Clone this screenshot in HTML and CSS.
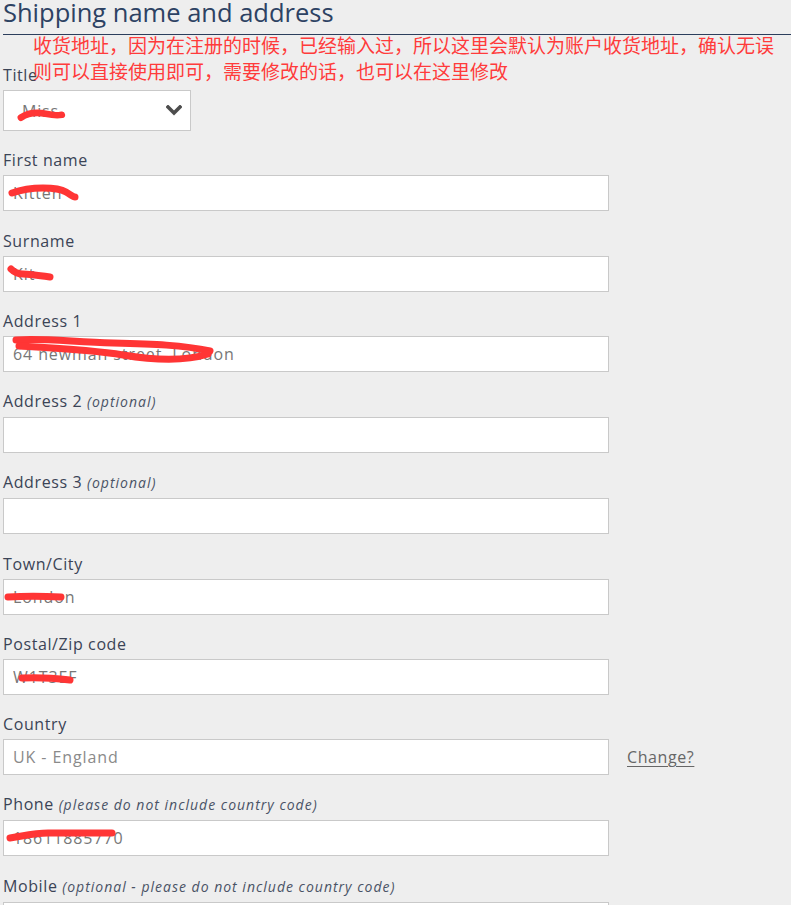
FILE: index.html
```html
<!DOCTYPE html>
<html lang="en">
<head>
<meta charset="utf-8">
<title>Shipping name and address</title>
<link rel="stylesheet" href="styles.css">
</head>
<body>
<div class="page">
  <h1 class="heading">Shipping name and address</h1>
  <p class="note">收货地址，因为在注册的时候，已经输入过，所以这里会默认为账户收货地址，确认无误<br>则可以直接使用即可，需要修改的话，也可以在这里修改</p>
  <form class="form">
    <div class="field">
      <label class="label">Title</label>
      <div class="select">
        <span class="select-value">Miss</span>
        <svg class="chevron" width="16" height="11" viewBox="0 0 16 11"><polyline points="2,2 8,8 14,2" fill="none" stroke="#4d4d4d" stroke-width="3.6" stroke-linecap="square"/></svg>
        <svg class="scribble" viewBox="0 0 188 41"><path d="M14 28 C20 24, 30 22, 40 24 S52 26, 57 25" /></svg>
      </div>
    </div>
    <div class="field">
      <label class="label">First name</label>
      <div class="input-wrap">
        <input class="input" type="text" value="Kitten" readonly>
        <svg class="scribble" viewBox="0 0 606 36"><path d="M9 18 C20 14, 30 13, 40 13 S58 14, 63 17 S70 22, 72 22" /></svg>
      </div>
    </div>
    <div class="field">
      <label class="label">Surname</label>
      <div class="input-wrap">
        <input class="input" type="text" value="Kit" readonly>
        <svg class="scribble" viewBox="0 0 606 36"><path d="M8 13 C11 16, 14 18, 20 18 S40 20, 47 21" /></svg>
      </div>
    </div>
    <div class="field">
      <label class="label">Address 1</label>
      <div class="input-wrap">
        <input class="input" type="text" value="64 newman street, London" readonly>
        <svg class="scribble" viewBox="0 0 606 36"><path d="M13 4 C40 2, 70 6, 110 7 S180 9, 207 15" /><path d="M16 10 C50 12, 90 14, 120 19 S180 26, 205 18" /></svg>
      </div>
    </div>
    <div class="field">
      <label class="label">Address 2 <em class="hint">(optional)</em></label>
      <div class="input-wrap"><input class="input" type="text" value="" readonly></div>
    </div>
    <div class="field">
      <label class="label">Address 3 <em class="hint">(optional)</em></label>
      <div class="input-wrap"><input class="input" type="text" value="" readonly></div>
    </div>
    <div class="field">
      <label class="label">Town/City</label>
      <div class="input-wrap">
        <input class="input" type="text" value="London" readonly>
        <svg class="scribble" viewBox="0 0 606 36"><path d="M5 18 C20 17, 40 17, 58 18" /></svg>
      </div>
    </div>
    <div class="field">
      <label class="label">Postal/Zip code</label>
      <div class="input-wrap">
        <input class="input" type="text" value="W1T3EF" readonly>
        <svg class="scribble" viewBox="0 0 606 36"><path d="M19 19 C35 18, 50 19, 67 21" /></svg>
      </div>
    </div>
    <div class="field">
      <label class="label">Country</label>
      <div class="row">
        <div class="input-wrap"><input class="input input-muted" type="text" value="UK - England" readonly></div>
        <a class="change" href="#">Change?</a>
      </div>
    </div>
    <div class="field">
      <label class="label">Phone <em class="hint">(please do not include country code)</em></label>
      <div class="input-wrap">
        <input class="input" type="text" value="18611885770" readonly>
        <svg class="scribble" viewBox="0 0 606 36"><path d="M7 18 C20 16, 32 13, 45 13 S90 13, 109 13" /></svg>
      </div>
    </div>
    <div class="field">
      <label class="label">Mobile <em class="hint">(optional - please do not include country code)</em></label>
      <div class="input-wrap"><input class="input" type="text" value="" readonly></div>
    </div>
  </form>
</div>
</body>
</html>
```
FILE: styles.css
```css
html, body {
  margin: 0;
  padding: 0;
  background: #eeeeee;
}

body {
  font-family: "Open Sans", "Liberation Sans", sans-serif;
  overflow: hidden;
}

.page {
  position: relative;
  padding-left: 3px;
}

.heading {
  margin: 0;
  font-size: 25.5px;
  font-weight: 400;
  line-height: 24px;
  padding-bottom: 10px;
  color: #2d4263;
  border-bottom: 1px solid #2c3e5c;
}

.note {
  position: absolute;
  left: 33px;
  top: 32px;
  margin: 0;
  font-family: "Noto Sans CJK SC", "Noto Sans", sans-serif;
  font-size: 19px;
  line-height: 26px;
  color: #ff3b3b;
  white-space: nowrap;
  z-index: 2;
}

.form {
  display: flex;
  flex-direction: column;
  gap: 18.27px;
  margin-top: 29px;
}

.field {
  display: flex;
  flex-direction: column;
  gap: 4px;
}

.label {
  font-size: 16px;
  line-height: 22px;
  letter-spacing: 0.6px;
  color: #3b4456;
}

.hint {
  font-size: 14px;
  letter-spacing: 1px;
  color: #4a5366;
}

.select {
  position: relative;
  box-sizing: border-box;
  width: 188px;
  height: 41px;
  background: #fff;
  border: 1px solid #c9c9c9;
  display: flex;
  align-items: center;
  justify-content: space-between;
  padding: 0 8px 0 18px;
  font-size: 16px;
  letter-spacing: 0.8px;
  color: #777;
}

.chevron {
  display: block;
}

.input-wrap {
  position: relative;
  width: 606px;
  height: 36px;
}

.input {
  display: block;
  box-sizing: border-box;
  width: 606px;
  height: 36px;
  margin: 0;
  padding: 0 9px;
  border: 1px solid #c9c9c9;
  border-radius: 0;
  background: #fff;
  font-family: "Open Sans", "Liberation Sans", sans-serif;
  font-size: 16px;
  letter-spacing: 0.9px;
  color: #777;
  outline: none;
}

.input-muted {
  color: #8a8a8a;
}

.scribble {
  position: absolute;
  left: 0;
  top: 0;
  width: 100%;
  height: 100%;
  overflow: visible;
  pointer-events: none;
  fill: none;
  stroke: #ff3535;
  stroke-width: 7;
  stroke-linecap: round;
  stroke-linejoin: round;
}

.row {
  display: flex;
  align-items: center;
  gap: 18px;
}

.change {
  font-size: 16px;
  letter-spacing: 0.6px;
  color: #666;
  text-decoration: underline;
  text-underline-offset: 3px;
}
```
